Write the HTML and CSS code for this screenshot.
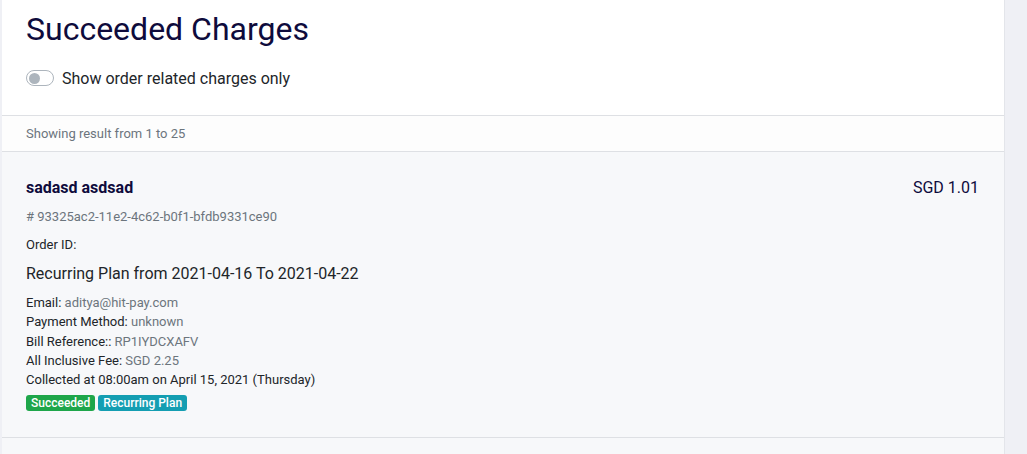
FILE: index.html
```html
<!DOCTYPE html>
<html>
<head>
<meta charset="utf-8">
<link rel="stylesheet" href="styles.css">
</head>
<body>
<div class="page">
  <div class="card">
    <div class="header">
      <h1 class="title">Succeeded Charges</h1>
      <label class="toggle-row">
        <span class="switch"><span class="knob"></span></span>
        <span class="toggle-label">Show order related charges only</span>
      </label>
    </div>
    <div class="summary">Showing result from 1 to 25</div>
    <div class="item">
      <div class="item-top">
        <div class="name">sadasd asdsad</div>
        <div class="amount">SGD 1.01</div>
      </div>
      <div class="charge-id"># 93325ac2-11e2-4c62-b0f1-bfdb9331ce90</div>
      <div class="order-id">Order ID:</div>
      <div class="plan">Recurring Plan from 2021-04-16 To 2021-04-22</div>
      <div class="details">
        <div>Email: <span class="muted">aditya@hit-pay.com</span></div>
        <div>Payment Method: <span class="muted">unknown</span></div>
        <div>Bill Reference:: <span class="muted">RP1IYDCXAFV</span></div>
        <div>All Inclusive Fee: <span class="muted">SGD 2.25</span></div>
        <div>Collected at 08:00am on April 15, 2021 (Thursday)</div>
      </div>
      <div class="badges">
        <span class="badge badge-success">Succeeded</span>
        <span class="badge badge-info">Recurring Plan</span>
      </div>
    </div>
    <div class="item item-next"></div>
  </div>
</div>
</body>
</html>
```
FILE: styles.css
```css
* { box-sizing: border-box; }
html, body {
  margin: 0;
  padding: 0;
  background: #eff0f5;
  font-family: Roboto, "Liberation Sans", Arial, sans-serif;
  color: #212529;
  height: 454px;
  overflow: hidden;
}
.page {
  padding-left: 2px;
}
.card {
  width: 1003px;
  background: #ffffff;
  border-right: 1px solid #e3e5ea;
}
.header {
  padding: 10px 24px 25px 24px;
  border-bottom: 1px solid #dee0e4;
}
.title {
  margin: 0;
  font-size: 32px;
  line-height: 38px;
  font-weight: 400;
  color: #0e0b3c;
}
.toggle-row {
  display: flex;
  align-items: center;
  gap: 8px;
  margin-top: 18px;
  height: 24px;
}
.switch {
  display: flex;
  align-items: center;
  width: 28px;
  height: 16px;
  border: 1px solid #adb5bd;
  border-radius: 8px;
  background: #fff;
  padding-left: 2px;
}
.knob {
  width: 11px;
  height: 11px;
  border-radius: 50%;
  background: #adb5bd;
}
.toggle-label {
  font-size: 16px;
  color: #212529;
}
.summary {
  height: 36px;
  display: flex;
  align-items: center;
  padding-left: 24px;
  font-size: 13px;
  color: #6c757d;
  border-bottom: 1px solid #dee0e4;
  background: #fdfdfd;
}
.item {
  background: #f7f8fa;
  padding: 23px 25px 26px 24px;
  border-bottom: 1px solid #dee0e4;
}
.item-top {
  display: flex;
  justify-content: space-between;
  align-items: center;
  height: 24px;
}
.name {
  font-size: 16px;
  font-weight: 700;
  color: #0e0b3c;
}
.amount {
  font-size: 16px;
  color: #0e0b3c;
}
.charge-id {
  margin-top: 8px;
  font-size: 13px;
  line-height: 20px;
  color: #6c757d;
}
.order-id {
  margin-top: 8px;
  font-size: 13px;
  line-height: 20px;
}
.plan {
  margin-top: 7px;
  font-size: 16px;
  line-height: 24px;
}
.details {
  margin-top: 7px;
  font-size: 13px;
  line-height: 19.25px;
}
.muted {
  color: #6c757d;
}
.badges {
  display: flex;
  gap: 3px;
  margin-top: 6px;
}
.badge {
  display: inline-flex;
  align-items: center;
  height: 16px;
  padding: 0 5px;
  border-radius: 3px;
  font-size: 12px;
  font-weight: 500;
  color: #fff;
}
.badge-success { background: #1ea64a; }
.badge-info { background: #149eb2; }
.item-next {
  height: 16px;
  border-bottom: none;
}
```
